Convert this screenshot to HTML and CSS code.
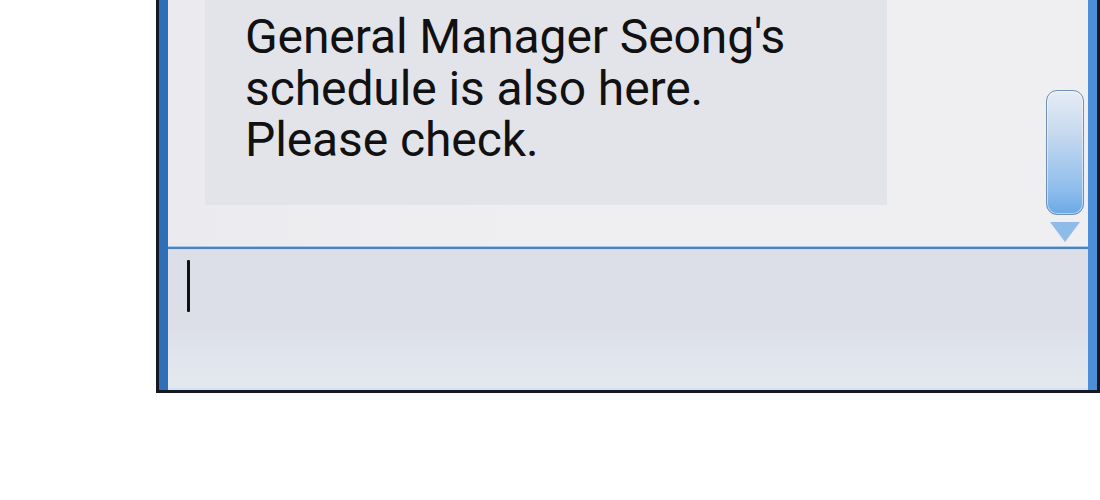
FILE: index.html
```html
<!DOCTYPE html>
<html lang="en">
<head>
<meta charset="utf-8">
<title>Chat</title>
<link rel="stylesheet" href="styles.css">
</head>
<body>
  <div class="window">
    <div class="frame">
      <div class="messages">
        <div class="bubble">
          <p class="bubble-text">General Manager Seong's<br>schedule is also here.<br>Please check.</p>
        </div>
        <div class="scroll">
          <div class="scroll-thumb"></div>
          <svg class="scroll-arrow" width="30" height="20" viewBox="0 0 30 20"><polygon points="0,0 30,0 15,20" fill="#8fbbe8"/></svg>
        </div>
      </div>
      <div class="divider"></div>
      <div class="input">
        <span class="caret"></span>
      </div>
    </div>
  </div>
</body>
</html>
```
FILE: styles.css
```css
html, body {
  margin: 0;
  padding: 0;
  background: #ffffff;
}

body {
  width: 1100px;
  height: 500px;
  overflow: hidden;
}

.window {
  margin-left: 156px;
  width: 944px;
  height: 393px;
  box-sizing: border-box;
  background: #161a20;
  padding: 0 3px 3px 3px;
}

.frame {
  height: 100%;
  box-sizing: border-box;
  display: flex;
  flex-direction: column;
  border-left: 9px solid #4d92db;
  border-right: 9px solid #4d92db;
  border-image: linear-gradient(90deg, #2f6fb8, #5fa3e6 50%, #4a8fd8) 1;
  border-image-slice: 0 1;
  background: #eeedf1;
  box-shadow: inset 0 -2px 0 #d3e3f2;
}

.messages {
  height: 247px;
  display: flex;
  background: linear-gradient(90deg, #ebebef, #efeef1 40%, #efeef1);
}

.bubble {
  margin-left: 37px;
  width: 682px;
  height: 205px;
  background: #e3e4e9;
}

.bubble-text {
  margin: 11px 0 0 40px;
  font-family: Roboto, "Liberation Sans", sans-serif;
  font-size: 48px;
  line-height: 51.5px;
  color: #111111;
  letter-spacing: -0.1px;
}

.scroll {
  margin-left: auto;
  margin-right: 3px;
  width: 40px;
  padding-top: 90px;
  display: flex;
  flex-direction: column;
  align-items: center;
}

.scroll-thumb {
  width: 36px;
  height: 123px;
  border: 1.5px solid #6f8fb3;
  border-radius: 11px;
  background: linear-gradient(180deg, #e6ecf5 0%, #c6d9ef 35%, #8fbdec 80%, #6aa9e6 100%);
  box-shadow: inset 0 0 0 1px rgba(255, 255, 255, 0.5);
}

.scroll-arrow {
  display: block;
  margin-top: 7px;
}

.divider {
  height: 2px;
  background: #4f82b8;
  box-shadow: 0 -1px 0 #a9c9ea, 0 1px 0 #c7dbee;
  position: relative;
}

.input {
  flex: 1;
  margin-bottom: 2px;
  background: linear-gradient(180deg, #dcdee8 0%, #dcdee8 55%, #e1e6ee 80%, #e3e8ef 100%);
  padding: 11px 0 0 19px;
}

.caret {
  display: block;
  width: 3px;
  height: 52px;
  background: #111111;
  border-radius: 1px;
}
```
